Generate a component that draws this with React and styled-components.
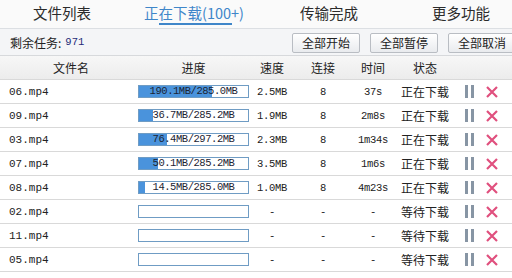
import React from "react";
import styled, { createGlobalStyle } from "styled-components";

const Global = createGlobalStyle`
  html, body { margin: 0; padding: 0; background: #ffffff; }
  body { width: 512px; height: 278px; overflow: hidden; font-family: "Noto Sans CJK SC", "Liberation Sans", sans-serif; }
`;

const Page = styled.div`
  position: relative;
  width: 512px;
  height: 278px;
  overflow: hidden;
  background: #fff;
`;

const TabBar = styled.div`
  display: flex;
  height: 28px;
  background: #fafafa;
  border-bottom: 1px solid #dcdfe3;
  overflow: hidden;
`;

const Tab = styled.div`
  position: relative;
  flex: 0 0 ${(p) => p.$w}px;
  display: flex;
  align-items: center;
  justify-content: center;
  font-size: 14.5px;
  color: ${(p) => (p.$active ? "#3f86c9" : "#2b2b2b")};
  white-space: nowrap;
  line-height: 1;
  padding-bottom: 2px;
  &::after {
    content: "";
    display: ${(p) => (p.$active ? "block" : "none")};
    position: absolute;
    left: 50%;
    bottom: 3px;
    width: 73px;
    margin-left: -35px;
    height: 2px;
    background: #3f86c9;
  }
`;

const Toolbar = styled.div`
  display: flex;
  align-items: center;
  justify-content: space-between;
  height: 26px;
  background: #f4f5f7;
  border-bottom: 1px solid #d7d9dc;
  padding-left: 10px;
`;

const Remain = styled.div`
  font-size: 12px;
  color: #222;
  display: flex;
  align-items: center;
  gap: 4px;
`;

const Count = styled.span`
  font-family: "Liberation Mono", monospace;
  font-size: 10.5px;
  color: #1f2b78;
`;

const Buttons = styled.div`
  display: flex;
  gap: 10px;
  margin-right: -4px;
  padding-top: 2px;
`;

const Btn = styled.button`
  width: 68px;
  height: 20px;
  padding: 0;
  border: 1px solid #b9bdc3;
  border-radius: 2px;
  background: linear-gradient(#ffffff, #e9ebee);
  font-family: "Noto Sans CJK SC", sans-serif;
  font-size: 12px;
  color: #222;
  line-height: 1;
`;

const Grid = styled.div`
  display: grid;
  grid-template-columns: 136px 115px 42px 60px 40px 64px 55px;
  height: 24px;
  background: ${(p) => (p.$head ? "linear-gradient(#f7f7f7, #ececec)" : "#fff")};
  border-bottom: 1px solid #d9d9d9;
  box-sizing: border-box;
`;

const Cell = styled.div`
  display: flex;
  align-items: center;
  justify-content: ${(p) => (p.$left ? "flex-start" : "center")};
  padding-left: ${(p) => p.$pl || 0}px;
  font-size: 12px;
  color: #222;
  white-space: nowrap;
  font-family: ${(p) => (p.$mono ? '"Liberation Mono", monospace' : '"Noto Sans CJK SC", sans-serif')};
  ${(p) => p.$mono && "font-size: 10.5px; letter-spacing: -0.3px;"}
`;

const NameCell = styled(Cell)`
  font-size: 11px;
  letter-spacing: 0;
`;

const Bar = styled.div`
  position: relative;
  width: 111px;
  height: 13px;
  box-sizing: border-box;
  border: 1px solid #6f9cc4;
  background: #fff;
  display: flex;
  align-items: center;
  justify-content: center;
  overflow: hidden;
`;

const Fill = styled.div`
  position: absolute;
  left: 0;
  top: 0;
  bottom: 0;
  background: #4a93dc;
`;

const BarText = styled.span`
  position: relative;
  font-family: "Liberation Mono", monospace;
  font-size: 10.5px;
  letter-spacing: -0.45px;
  color: #1c2433;
  line-height: 1;
`;

const Actions = styled.div`
  display: flex;
  align-items: center;
  padding-left: 8px;
  gap: 12px;
`;

const PauseIcon = () => (
  <svg width="9" height="13" viewBox="0 0 9 13">
    <rect x="0" y="0" width="3" height="13" fill="#8795a4" />
    <rect x="6" y="0" width="3" height="13" fill="#8795a4" />
  </svg>
);

const CloseIcon = () => (
  <svg width="12" height="12" viewBox="0 0 12 12">
    <path d="M1 1 L11 11 M11 1 L1 11" stroke="#e0507e" strokeWidth="2.2" strokeLinecap="butt" />
  </svg>
);

const rows = [
  { name: "06.mp4", done: 190.1, total: "285.0", speed: "2.5MB", conn: "8", time: "37s", status: "正在下载" },
  { name: "09.mp4", done: 36.7, total: "285.2", speed: "1.9MB", conn: "8", time: "2m8s", status: "正在下载" },
  { name: "03.mp4", done: 76.4, total: "297.2", speed: "2.3MB", conn: "8", time: "1m34s", status: "正在下载" },
  { name: "07.mp4", done: 50.1, total: "285.2", speed: "3.5MB", conn: "8", time: "1m6s", status: "正在下载" },
  { name: "08.mp4", done: 14.5, total: "285.0", speed: "1.0MB", conn: "8", time: "4m23s", status: "正在下载" },
  { name: "02.mp4", wait: true },
  { name: "11.mp4", wait: true },
  { name: "05.mp4", wait: true },
];

export default function App() {
  return (
    <Page>
      <Global />
      <TabBar>
        <Tab $w={124}>文件列表</Tab>
        <Tab $w={140} $active>正在下载(100+)</Tab>
        <Tab $w={130}>传输完成</Tab>
        <Tab $w={134}>更多功能</Tab>
      </TabBar>
      <Toolbar>
        <Remain>
          剩余任务:<Count>971</Count>
        </Remain>
        <Buttons>
          <Btn>全部开始</Btn>
          <Btn>全部暂停</Btn>
          <Btn>全部取消</Btn>
        </Buttons>
      </Toolbar>
      <Grid $head>
        <Cell $pl={6}>文件名</Cell>
        <Cell>进度</Cell>
        <Cell>速度</Cell>
        <Cell>连接</Cell>
        <Cell>时间</Cell>
        <Cell>状态</Cell>
        <Cell />
      </Grid>
      {rows.map((r) => {
        const pct = r.wait ? 0 : (r.done / parseFloat(r.total)) * 100;
        return (
          <Grid key={r.name}>
            <NameCell $left $pl={9} $mono>
              {r.name}
            </NameCell>
            <Cell>
              <Bar>
                {!r.wait && <Fill style={{ width: `${pct}%` }} />}
                {!r.wait && (
                  <BarText>
                    {r.done.toFixed(1)}MB/{r.total}MB
                  </BarText>
                )}
              </Bar>
            </Cell>
            <Cell $mono>{r.wait ? "-" : r.speed}</Cell>
            <Cell $mono>{r.wait ? "-" : r.conn}</Cell>
            <Cell $mono>{r.wait ? "-" : r.time}</Cell>
            <Cell>{r.wait ? "等待下载" : r.status}</Cell>
            <Actions>
              <PauseIcon />
              <CloseIcon />
            </Actions>
          </Grid>
        );
      })}
    </Page>
  );
}
